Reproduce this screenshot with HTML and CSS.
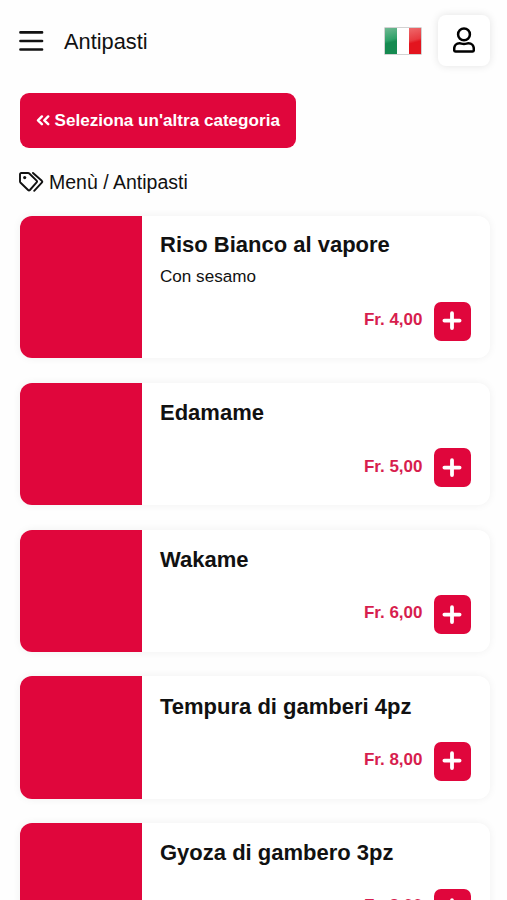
FILE: index.html
```html
<!DOCTYPE html>
<html lang="it">
<head>
<meta charset="utf-8">
<meta name="viewport" content="width=device-width, initial-scale=1">
<title>Antipasti</title>
<link rel="stylesheet" href="styles.css">
</head>
<body>
<svg class="sprite" aria-hidden="true">
  <symbol id="plus" viewBox="0 0 20 20"><path d="M10 2.200v14.800M2.400 9.600h15.200" fill="none" stroke="currentColor" stroke-width="3.800" stroke-linecap="round"/></symbol>
</svg>
<header class="topbar">
  <svg class="menu-icon" viewBox="0 0 24 22"><path d="M1.200 2.400h21.600M1.200 11h21.600M1.200 19.500h21.600" fill="none" stroke="currentColor" stroke-width="2.600" stroke-linecap="round"/></svg>
  <h1 class="page-title">Antipasti</h1>
  <div class="flag"><span class="green"></span><span class="white"></span><span class="red"></span></div>
  <button class="user-btn" aria-label="Account">
    <svg class="user-icon" viewBox="0 0 22 26"><g fill="none" stroke="currentColor" stroke-width="2.500"><circle cx="11" cy="7.400" r="5.900"/><path d="M6.700 16.300c1.400 0 2.300.7 4.300.7s2.900-.7 4.300-.7c3.500 0 5.500 2.400 5.500 5.500v1.400c0 .8-.5 1.300-1.300 1.300h-17c-.8 0-1.300-.5-1.300-1.300v-1.400c0-3.100 2-5.500 5.500-5.500Z"/></g></svg>
  </button>
</header>
<main class="content">
  <button class="back-btn"><svg class="chevrons" viewBox="0 0 14 12"><path d="M5.900 1.400 2 5.300l3.900 3.900M12.200 1.400 8.300 5.300l3.900 3.900" fill="none" stroke="currentColor" stroke-width="2.400" stroke-linecap="round" stroke-linejoin="round"/></svg><span>Seleziona un'altra categoria</span></button>
  <div class="crumbs"><svg class="tags-icon" viewBox="0 0 25 20"><g fill="none" stroke="currentColor" stroke-width="1.900" stroke-linejoin="round" stroke-linecap="round"><path d="M1 2.300Q1 1 2.300 1H9q.8 0 1.300.5l7.300 7.100q.9.900 0 1.800l-6.700 7.600q-.9.900-1.800 0L1.600 10.800Q1 10.200 1 9.400Z"/><path d="m14 1 8.800 7.800q.9.900 0 1.800l-7.600 8.200"/></g><circle cx="5.700" cy="5.600" r="1.600" fill="currentColor"/></svg><span>Menù / Antipasti</span></div>
  <section class="dishes">
    <article class="card described"><div class="thumb"></div><div class="info"><h2>Riso Bianco al vapore</h2><p>Con sesamo</p><div class="buy"><span class="price">Fr. 4,00</span><button class="add" aria-label="Aggiungi"><svg><use href="#plus"/></svg></button></div></div></article>
    <article class="card"><div class="thumb"></div><div class="info"><h2>Edamame</h2><div class="buy"><span class="price">Fr. 5,00</span><button class="add" aria-label="Aggiungi"><svg><use href="#plus"/></svg></button></div></div></article>
    <article class="card"><div class="thumb"></div><div class="info"><h2>Wakame</h2><div class="buy"><span class="price">Fr. 6,00</span><button class="add" aria-label="Aggiungi"><svg><use href="#plus"/></svg></button></div></div></article>
    <article class="card"><div class="thumb"></div><div class="info"><h2>Tempura di gamberi 4pz</h2><div class="buy"><span class="price">Fr. 8,00</span><button class="add" aria-label="Aggiungi"><svg><use href="#plus"/></svg></button></div></div></article>
    <article class="card"><div class="thumb"></div><div class="info"><h2>Gyoza di gambero 3pz</h2><div class="buy"><span class="price">Fr. 8,00</span><button class="add" aria-label="Aggiungi"><svg><use href="#plus"/></svg></button></div></div></article>
  </section>
</main>
</body>
</html>
```
FILE: styles.css
```css
* { box-sizing: border-box; }
html { height: 100%; overflow: hidden; }
body {
  margin: 0;
  height: 900px;
  overflow: hidden;
  background: #fefefe;
  color: #111;
  font-family: "Liberation Sans", Arial, sans-serif;
}
h1, h2, p { margin: 0; }
button { border: 0; padding: 0; font: inherit; }
svg { display: block; flex: none; }
.sprite { width: 0; height: 0; position: absolute; }

.topbar {
  display: flex;
  align-items: center;
  height: 82px;
  padding: 0 17.500px 0 19px;
}
.menu-icon { width: 24.500px; height: 22px; }
.page-title {
  margin-left: 20.500px;
  padding-top: 1px;
  font-size: 21.800px;
  font-weight: 400;
  line-height: 26px;
}
.flag {
  display: flex;
  width: 38px;
  height: 28px;
  margin-left: auto;
  border-radius: 1px;
  overflow: hidden;
  border: 1px solid rgba(110, 110, 110, .3);
}
.flag span { flex: 1; }
.green { background: linear-gradient(165deg, #6fb992 0%, #2fa169 45%, #158a50 55%); }
.white { background: #fff; }
.red { background: linear-gradient(165deg, #ee6a6c 0%, #e83a40 45%, #e3141e 55%); }
.user-btn {
  display: grid;
  place-items: center;
  width: 52px;
  height: 51px;
  margin: 0 0 2px 15.500px;
  border-radius: 8px;
  background: #fff;
  color: #000;
  box-shadow: 0 0 8px rgba(0, 0, 0, .11);
}
.user-icon { width: 22px; height: 26px; }

.content { padding: 11px 17.500px 0 19.500px; }
.back-btn {
  display: flex;
  align-items: center;
  gap: 5px;
  width: 276.400px;
  height: 55.400px;
  padding-left: 16px;
  border-radius: 9px;
  background: #e0063c;
  color: #fff;
  font-size: 17.100px;
  font-weight: 700;
  white-space: nowrap;
}
.chevrons { width: 14px; height: 12px; }
.crumbs {
  display: flex;
  align-items: center;
  gap: 5px;
  height: 26px;
  margin-top: 20.600px;
  font-size: 19.500px;
}
.tags-icon { width: 25px; height: 20px; margin-left: -.5px; }
.crumbs span { padding-top: .5px; }

.dishes {
  display: flex;
  flex-direction: column;
  gap: 24.500px;
  margin-top: 21px;
}
.card {
  display: flex;
  flex: none;
  min-height: 122.200px;
  border-radius: 12px;
  background: #fff;
  box-shadow: 0 0 8px rgba(0, 0, 0, .06);
}
.thumb {
  width: 122px;
  border-radius: 12px 0 0 12px;
  background: #e0063c;
}
.info {
  display: flex;
  flex: 1;
  flex-direction: column;
  padding: 16.200px 18.500px 17.700px;
}
.described .info { padding-top: 15.300px; }
.info h2 { font-size: 22px; line-height: 27px; }
.info p {
  margin: 8.700px 0 14.800px;
  font-size: 17.100px;
  line-height: 20px;
}
.buy {
  display: flex;
  align-items: center;
  justify-content: flex-end;
  gap: 11px;
  margin-top: auto;
}
.price {
  padding-bottom: 2.600px;
  color: #d71e4e;
  font-size: 17px;
  font-weight: 700;
}
.card:last-child .price { padding-bottom: 4px; }
.add {
  display: grid;
  place-items: center;
  width: 37.500px;
  height: 39px;
  border-radius: 7px;
  background: #e0063c;
  color: #fff;
}
.add svg { width: 20px; height: 20px; }
```
